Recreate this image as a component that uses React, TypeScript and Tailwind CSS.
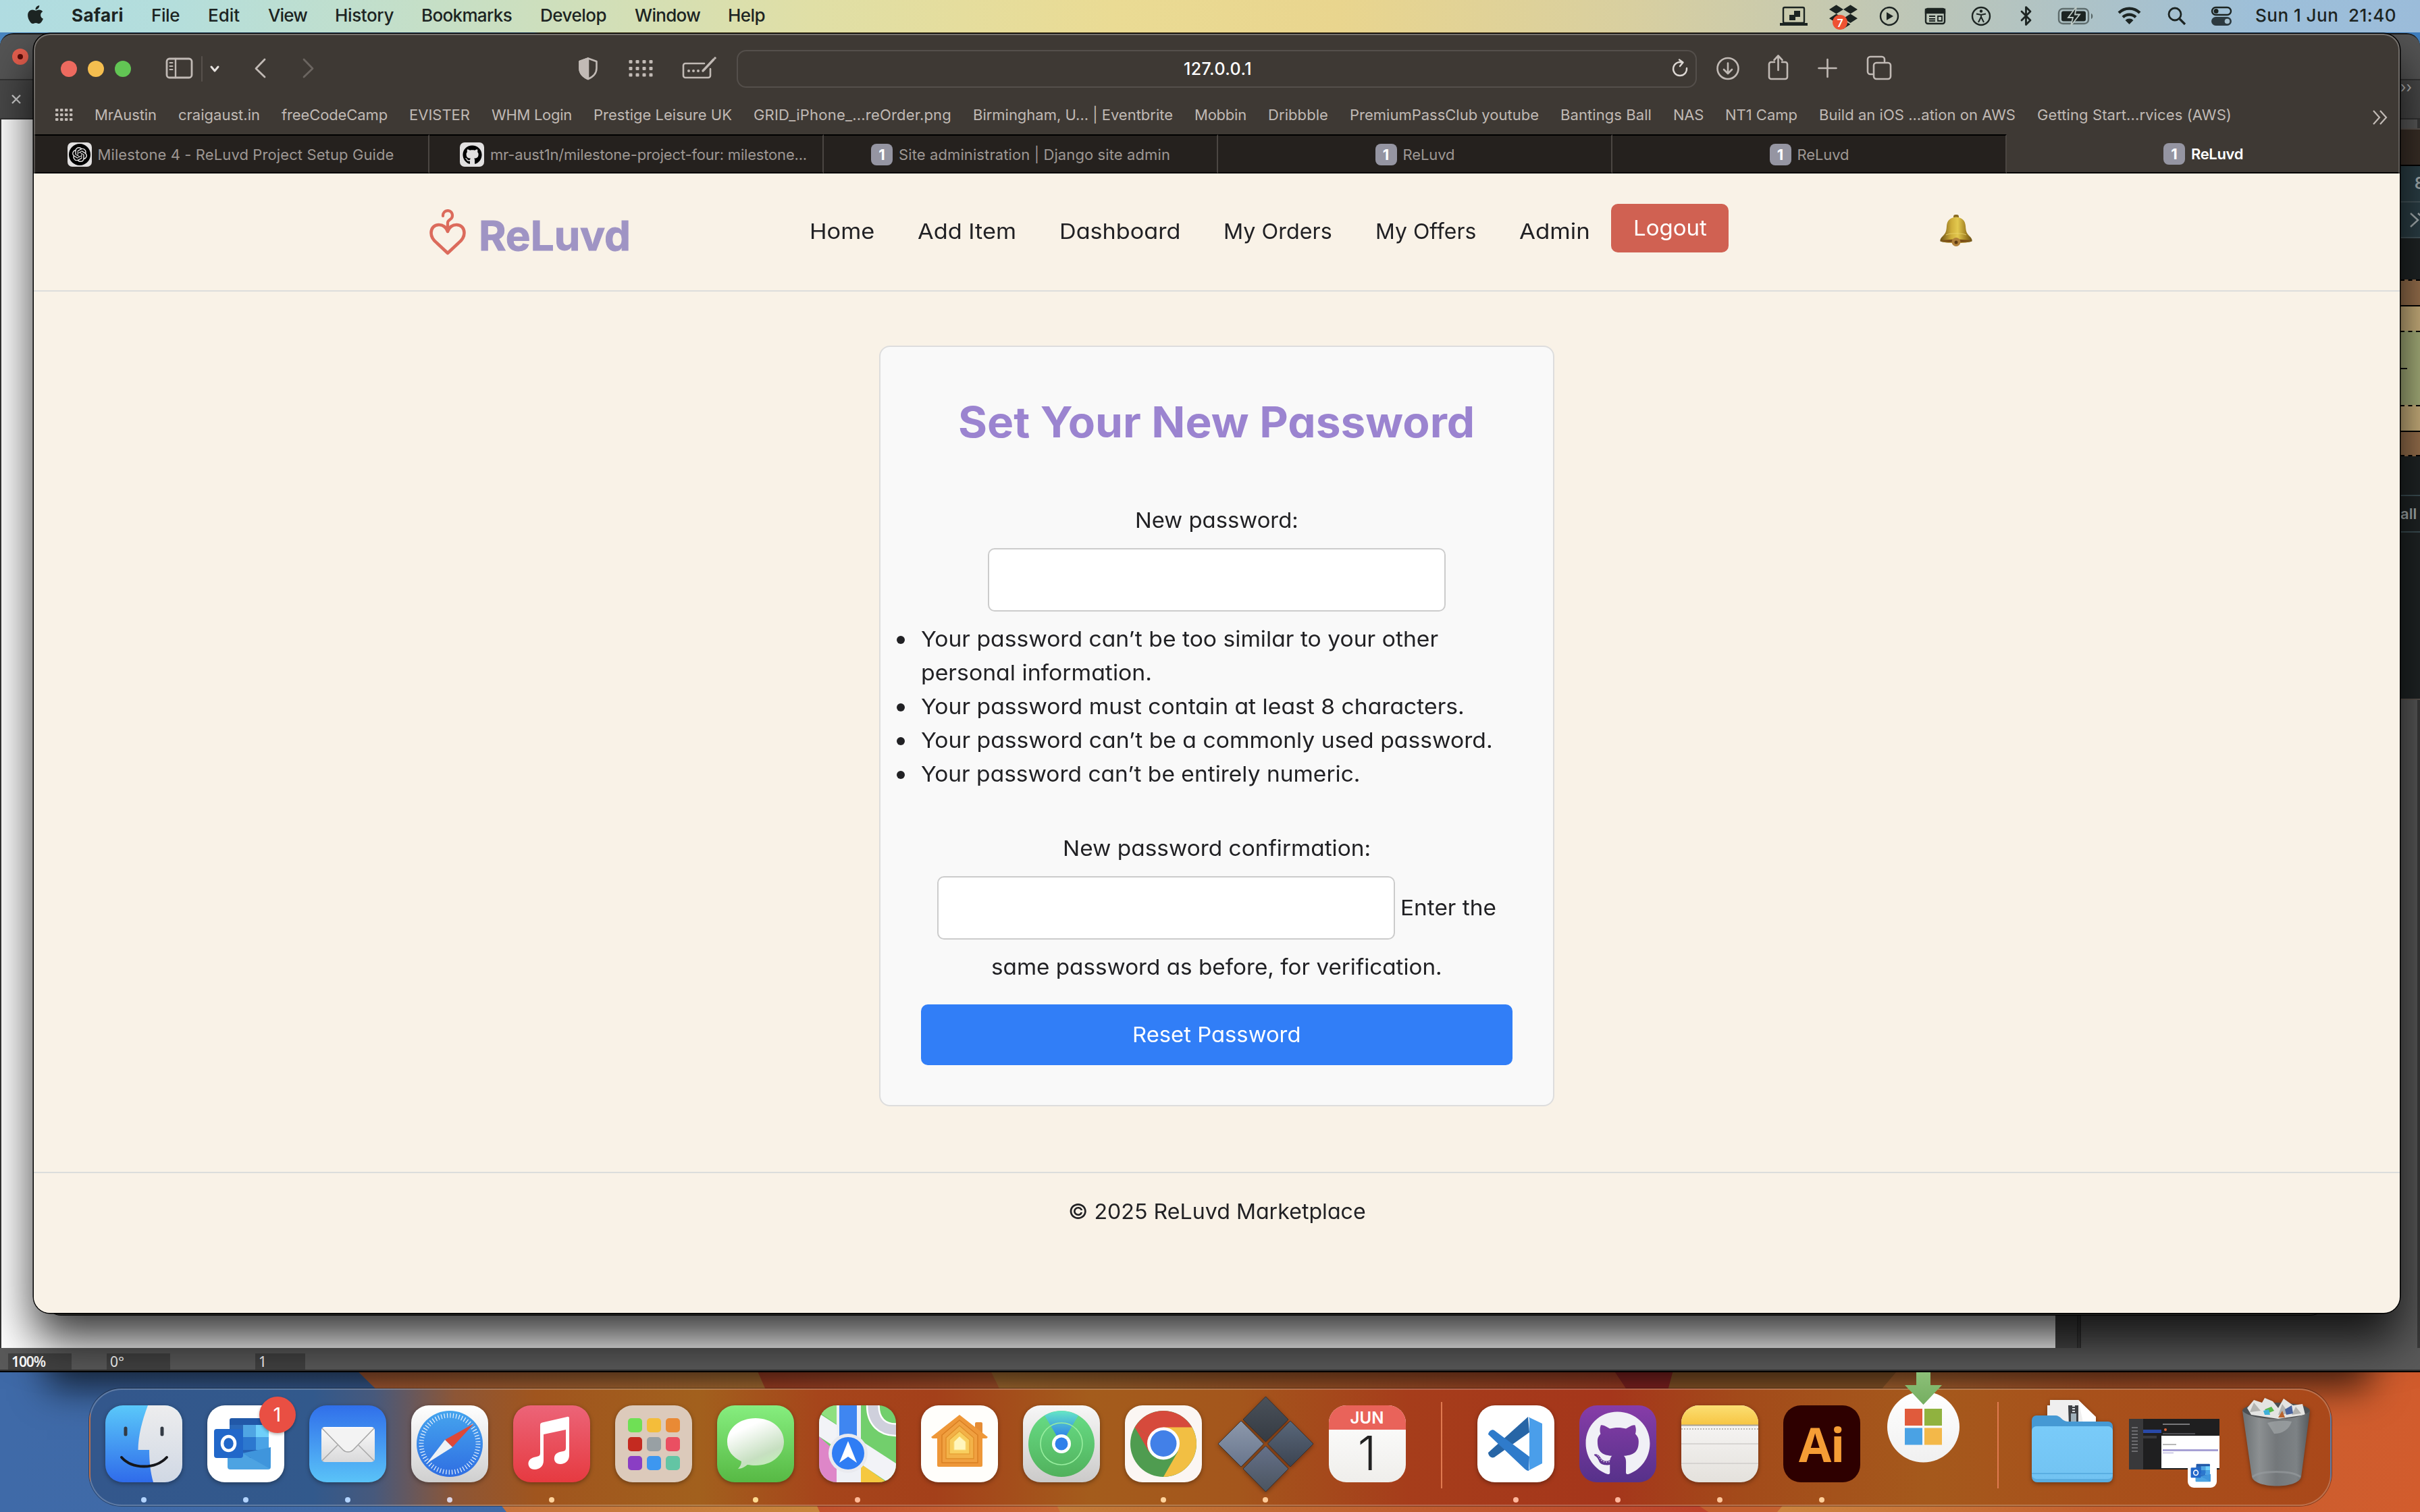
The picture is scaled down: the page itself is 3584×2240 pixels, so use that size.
import React, { useLayoutEffect, useRef, type ReactNode } from "react";
import { FaApple, FaDropbox, FaGithub } from "react-icons/fa";
import { SiOpenai } from "react-icons/si";
import { Bluetooth } from "lucide-react";

/* Text tracked at run time so that it fills a given width. */
function Fit({ w, children, className = "" }: { w: number; children: string; className?: string }) {
  const ref = useRef<HTMLSpanElement>(null);
  useLayoutEffect(() => {
    const el = ref.current;
    if (!el) return;
    el.style.letterSpacing = "0px";
    const natural = el.getBoundingClientRect().width;
    el.style.letterSpacing = `${(w - natural) / children.length}px`;
  }, [w, children]);
  return (
    <span ref={ref} className={`inline-block whitespace-pre ${className}`}>
      {children}
    </span>
  );
}

/* Text widened at run time, for the broad geometric look of the shop's pages. */
function Wide({ w, children, className = "" }: { w: number; children: string; className?: string }) {
  const ref = useRef<HTMLSpanElement>(null);
  useLayoutEffect(() => {
    const el = ref.current;
    if (el) el.style.transform = `scaleX(${w / el.offsetWidth})`;
  }, [w, children]);
  return (
    <span className={`inline-block whitespace-pre text-left ${className}`} style={{ width: w }}>
      <span ref={ref} className="inline-block origin-left">{children}</span>
    </span>
  );
}

/* ------------------------------------------------------------------ wallpaper */

function Wallpaper() {
  return (
    <svg className="absolute left-0 top-[2000px] h-[240px] w-[3584px]" viewBox="0 2000 3584 240" preserveAspectRatio="none">
      <defs>
        <linearGradient id="wpA" x1="0" x2="1"><stop offset="0" stopColor="#c66a3d" /><stop offset=".25" stopColor="#c8873b" /><stop offset="1" stopColor="#c8873b" /></linearGradient>
        <linearGradient id="wpB" x1="0" x2="1"><stop offset="0" stopColor="#bf4a2b" /><stop offset=".2" stopColor="#c86a35" /><stop offset="1" stopColor="#c86a35" /></linearGradient>
        <linearGradient id="wpC" x1="0" x2="1"><stop offset="0" stopColor="#c4823a" /><stop offset=".25" stopColor="#c06430" /><stop offset=".5" stopColor="#bd432b" /></linearGradient>
        <linearGradient id="wpD" x1="0" x2="1"><stop offset="0" stopColor="#cc853f" /><stop offset=".5" stopColor="#c4602f" /><stop offset="1" stopColor="#d25c2d" /></linearGradient>
        <linearGradient id="wpE" x1="0" x2="1"><stop offset="0" stopColor="#3f6aa8" /><stop offset="1" stopColor="#45699e" /></linearGradient>
      </defs>
      <rect x="0" y="2000" width="3584" height="240" fill="url(#wpE)" />
      <path d="M500 2000 C600 2110 700 2170 750 2240 H3584 V2000Z" fill="url(#wpA)" />
      <path d="M1108 2000 L1214 2240 H3584 V2000Z" fill="url(#wpB)" />
      <path d="M1452 2000 L1570 2240 H3584 V2000Z" fill="url(#wpC)" />
      <path d="M2370 2000 L2530 2240 H3584 V2000Z" fill="#9c2a28" />
      <path d="M2490 2000 L2440 2180 L2530 2240 H2700 V2000Z" fill="#c4602f" />
      <path d="M2486 2000 L2470 2060 L2800 2060 L2835 2000Z" fill="#a2652f" />
      <path d="M2836 2000 L2632 2240 H3584 V2000Z" fill="url(#wpD)" />
    </svg>
  );
}

/* ------------------------------------------------------------------ menu bar */

const menus: [string, number, string][] = [
  ["File", 42, "w-[84px]"],
  ["Edit", 47, "w-[89px]"],
  ["View", 58, "w-[99px]"],
  ["History", 87, "w-[128px]"],
  ["Bookmarks", 134, "w-[176px]"],
  ["Develop", 98, "w-[140px]"],
  ["Window", 97, "w-[138px]"],
  ["Help", 55, "w-[60px]"],
];

function MenuBar() {
  return (
    <div className="absolute left-0 top-0 flex h-12 w-[3584px] items-center bg-[linear-gradient(90deg,#b0dce1_0px,#b4dedc_250px,#c6dfc6_650px,#e0dfa6_1200px,#eadb94_1650px,#e9d58e_1980px,#d8cfa0_2420px,#b9c5bb_2900px,#9dbfd9_3350px,#9bbcda_3584px)] pb-[3px] pl-[37px] text-[26px] text-[#1c2422]">
      <FaApple className="mb-[2px] size-[31px]" />
      <div className="ml-[38px] w-[118px]"><Fit w={77} className="font-bold">Safari</Fit></div>
      {menus.map(([t, w, box]) => (
        <div key={t} className={box}><Fit w={w} className="font-medium">{t}</Fit></div>
      ))}
      <svg className="ml-auto mt-[3px] h-12 w-[720px]" viewBox="2620 0 720 48" fill="none" stroke="#1c2422" strokeWidth="2.4">
        <rect x="2641" y="11" width="31" height="23" rx="2" />
        <path d="M2636 36 H2677" strokeWidth="4" />
        <path d="M2657 16h9v9h-9zM2650 22h9v8h-9z" fill="#1c2422" stroke="none" />
        <circle cx="2798" cy="24" r="13" /><path d="M2794 18 L2804 24 L2794 30Z" fill="#1c2422" stroke="none" />
        <rect x="2852" y="13" width="28" height="22" rx="3" /><path d="M2852 14h28v5h-28z" fill="#1c2422" /><path d="M2857 24h9M2857 28h9M2857 31h9M2870 24h6v7h-6z" strokeWidth="1.800" />
        <circle cx="2934" cy="24" r="13" /><circle cx="2934" cy="16.500" r="2.200" fill="#1c2422" stroke="none" /><path d="M2927 20.500 L2934 22 L2941 20.500 M2934 22 V26 M2930 33 L2934 25 L2938 33" strokeWidth="2" />
        <rect x="3049" y="13" width="44" height="22" rx="6" opacity=".55" /><path d="M3097 20 v8 c3-1 3-7 0-8z" fill="#1c2422" stroke="none" opacity=".6" />
        <rect x="3053" y="16.500" width="36" height="15" rx="3" fill="#1c2422" stroke="none" />
        <path d="M3075 10 L3063 26 H3070 L3067 38 L3080 21.500 H3073Z" fill="#1c2422" stroke="#bcc8c4" strokeWidth="1.800" />
        <g strokeWidth="4.200"><path d="M3138 19 a22 22 0 0 1 31 0" /><path d="M3144 25.500 a13.500 13.500 0 0 1 19 0" /></g>
        <path d="M3153.500 36 L3147.500 30 a8.500 8.500 0 0 1 12 0Z" fill="#1c2422" stroke="none" />
        <circle cx="3221" cy="21" r="9" strokeWidth="2.800" /><path d="M3228 28 L3236 36" strokeWidth="3.200" />
        <rect x="3276" y="11" width="28" height="11" rx="5.500" /><circle cx="3282" cy="16.500" r="3.500" fill="#1c2422" stroke="none" />
        <rect x="3275" y="25" width="30" height="13" rx="6.500" fill="#2c3a40" stroke="none" /><circle cx="3298.500" cy="31.500" r="3.800" fill="#a5bfcd" stroke="none" />
      </svg>
      <FaDropbox className="absolute left-[2709px] top-[4px] size-[42px]" />
      <div className="absolute left-[2714px] top-[22px] grid size-[22px] place-items-center rounded-full bg-[#ee5233] text-[16px] font-semibold text-white">7</div>
      <Bluetooth className="absolute left-[2985px] top-[8px] size-[31px]" strokeWidth={2.2} />
      <div className="w-[244px]"><Fit w={209} className="font-medium">{"Sun 1 Jun  21:40"}</Fit></div>
    </div>
  );
}

/* ------------------------------------------------------------------ windows behind */

function ArtboardWindow() {
  return (
    <div className="absolute left-0 top-[49px] flex h-[1984px] w-[3584px] flex-col overflow-hidden rounded-t-[20px] border-b-2 border-t-2 border-b-black border-t-[#1b1b1b] bg-[#494949]">
      <div className="flex h-[68px] items-center justify-between border-b-2 border-[#333] bg-[#545454] pl-[18px]">
        <div className="grid size-6 place-items-center rounded-full bg-[#e9604f]"><div className="size-2 rounded-full bg-[#5c0d08]" /></div>
      </div>
      <div className="flex h-[58px] items-center justify-between border-b-2 border-[#333] bg-[#484848] pl-[17px]">
        <svg className="size-[14px]" viewBox="0 0 14 14" stroke="#d4d4d4" strokeWidth="2.400"><path d="M1 1L13 13M13 1L1 13" /></svg>
        <div className="self-start pr-[12px] text-[22px] leading-[20px] text-[#bbb]">››</div>
      </div>
      <div className="flex min-h-0 flex-1">
        <div className="w-[3044px] border-l-2 border-[#333] bg-white" />
        <div className="w-8" />
        <div className="w-[6px] border-x-2 border-[#333] bg-[#404040]" />
        <div className="flex-1 border-r-4 border-[#3a3a3a] bg-[#5a5a5a]" />
      </div>
      <div className="flex h-8 items-end bg-[#5a5a5a] pl-[12px] font-['Noto_Sans'] text-[21px] text-white">
        <div className="flex h-6 w-[94px] items-center bg-[#424242] pl-[5px] pt-[2px]"><Fit w={50} className="font-semibold">100%</Fit></div>
        <div className="ml-[52px] flex h-6 w-[94px] items-center bg-[#424242] pl-[5px] pt-[2px]">0°</div>
        <div className="ml-[126px] flex h-6 w-[74px] items-center bg-[#424242] pl-[5px] pt-[2px]">1</div>
      </div>
      <div className="h-[2px] bg-[#333]" />
    </div>
  );
}

function InspectorWindow() {
  return (
    <div className="absolute left-[3400px] top-[190px] flex h-[847px] w-[184px] flex-col overflow-hidden border-b-2 border-t-2 border-[#5d5651] bg-[#1f2425] pl-[155px] text-[#a9b2b4]">
      <div className="h-[54px] border-b-2 border-black bg-[#3a2f27]" />
      <div className="flex h-[54px] items-center justify-end border-b-2 border-[#45565c] bg-[#2b3f46] text-[24px] font-semibold"><span className="-mr-[7px]">8</span></div>
      <div className="flex h-[53px] items-center justify-end overflow-hidden border-b-2 border-[#45565c] bg-[#2b3f46]">
        <svg className="h-[22px] w-[15px]" viewBox="0 0 15 22" fill="none" stroke="#a9b2b4" strokeWidth="2.400"><path d="M1 1L12 11L1 21M12 1L23 11" /></svg>
      </div>
      <div className="h-[61px]" />
      <div className="h-[38px] border-t-2 border-dashed border-black bg-[#9a724e]" />
      <div className="h-[38px] border-t-2 border-black bg-[#cdb37e]" />
      <div className="flex h-[110px] items-center border-t-2 border-dashed border-black bg-[#a9b27c]"><div className="h-[2px] w-[10px] bg-[#111]" /></div>
      <div className="h-[38px] border-t-2 border-dashed border-black bg-[#cdb37e]" />
      <div className="h-[38px] border-y-2 border-b-black border-t-black bg-[#9a724e] [border-bottom-style:dashed]" />
      <div className="h-[57px]" />
      <div className="flex h-[56px] items-center border-y-2 border-[#3d5056] text-[22px] font-semibold">all</div>
    </div>
  );
}

/* ------------------------------------------------------------------ Safari chrome */

function ToolbarIcons() {
  return (
    <>
      <svg className="absolute left-[190px] top-[20px] h-[64px] w-[240px]" viewBox="240 70 240 64" fill="none" stroke="#c1bab5" strokeWidth="2.800" strokeLinecap="round" strokeLinejoin="round">
        <rect x="247" y="87" width="37" height="28" rx="4" /><path d="M260 87 V115" strokeWidth="2.400" /><path d="M251.500 93h4M251.500 98h4M251.500 103h4" strokeWidth="2" />
        <path d="M299 84 V120" stroke="#57514c" strokeWidth="2" />
        <path d="M313 99 L318 105 L323 99" stroke="#e6e2df" strokeWidth="3" />
        <path d="M392 88 L379 101.500 L392 114" />
        <path d="M450 88 L463 101.500 L450 114" stroke="#6b6560" />
      </svg>
      <svg className="absolute left-[790px] top-[20px] h-[64px] w-[240px]" viewBox="840 70 240 64" fill="none" stroke="#c1bab5" strokeWidth="2.600" strokeLinecap="round" strokeLinejoin="round">
        <path d="M871 86.500 L883.500 91 V101 C883.500 109 878 114 871 117 C864 114 858.500 109 858.500 101 V91Z" />
        <path d="M871 86.500 V117 C864 114 858.500 109 858.500 101 V91Z" fill="#c1bab5" />
        {[934, 944, 954, 964].map((x) => [91.5, 101.5, 111].map((y) => <rect key={`${x}-${y}`} x={x - 2.500} y={y - 2.500} width="5" height="5" rx="1.200" fill="#c1bab5" stroke="none" />))}
        <path d="M1043 94 H1015 a3 3 0 0 0 -3 3 V112 a3 3 0 0 0 3 3 H1049 a3 3 0 0 0 3 -3 V102" />
        <path d="M1041 105 L1057 88" strokeWidth="3.400" /><path d="M1059 86 v.01" strokeWidth="3.600" />
        <path d="M1020 105v.01M1027 105v.01M1034 105v.01" strokeWidth="4" />
      </svg>
      <svg className="absolute left-[2420px] top-[20px] h-[64px] w-[360px]" viewBox="2470 70 360 64" fill="none" stroke="#c1bab5" strokeWidth="2.600" strokeLinecap="round" strokeLinejoin="round">
        <path d="M2491 92.500 A10 10 0 1 0 2498 101" stroke="#dcd7d3" strokeWidth="2.400" /><path d="M2487 88.500 L2492.500 92.500 L2488 98" stroke="#dcd7d3" strokeWidth="2.400" />
        <circle cx="2559" cy="101.500" r="15.500" /><path d="M2559 93.500 V108 M2553 103 L2559 109 L2565 103" />
        <path d="M2628 92 H2623 a3 3 0 0 0 -3 3 V114 a3 3 0 0 0 3 3 H2644 a3 3 0 0 0 3 -3 V95 a3 3 0 0 0 -3 -3 H2639 M2633.500 104 V83 M2627.500 89 L2633.500 82.500 L2639.500 89" />
        <path d="M2706.500 88 V114 M2693.500 101 H2719.500" />
        <rect x="2775" y="93" width="25" height="24" rx="4" /><path d="M2773 110 H2770 a4 4 0 0 1 -4 -4 V88 a4 4 0 0 1 4 -4 H2787 a4 4 0 0 1 4 4 V91" />
      </svg>
    </>
  );
}

const bookmarks: [string, number][] = [
  ["MrAustin", 92], ["craigaust.in", 121], ["freeCodeCamp", 157], ["EVISTER", 90], ["WHM Login", 119],
  ["Prestige Leisure UK", 205], ["GRID_iPhone_...reOrder.png", 293], ["Birmingham, U... | Eventbrite", 296],
  ["Mobbin", 77], ["Dribbble", 89], ["PremiumPassClub youtube", 280], ["Bantings Ball", 135], ["NAS", 45],
  ["NT1 Camp", 107], ["Build an iOS ...ation on AWS", 291], ["Getting Start...rvices (AWS)", 288],
];

const One = () => <span className="grid size-8 place-items-center rounded-[8px] bg-[#9595a2] text-[22px] font-bold text-white">1</span>;

const idle = "border-y-2 border-r-2 border-y-black border-r-[#4b4642] bg-[#25211e] text-[#9d9793]";

const tabs: { icon: ReactNode; text: string; w: number; box: string }[] = [
  { icon: <span className="grid size-9 place-items-center rounded-[7px] bg-[#e2e0e0]"><span className="grid size-8 place-items-center rounded-full bg-black text-[#e2e0e0]"><SiOpenai className="size-[22px]" /></span></span>, text: "Milestone 4 - ReLuvd Project Setup Guide", w: 439, box: `w-[586px] pr-[1px] ${idle}` },
  { icon: <span className="grid size-9 place-items-center rounded-[7px] bg-[#e2e0e0] text-black"><FaGithub className="size-[29px]" /></span>, text: "mr-aust1n/milestone-project-four: milestone...", w: 469, box: `w-[584px] pl-[22px] ${idle}` },
  { icon: <One />, text: "Site administration | Django site admin", w: 402, box: `w-[584px] pl-[1px] ${idle}` },
  { icon: <One />, text: "ReLuvd", w: 77, box: `w-[584px] pl-[1px] ${idle}` },
  { icon: <One />, text: "ReLuvd", w: 77, box: `w-[584px] pl-[1px] ${idle}` },
  { icon: <One />, text: "ReLuvd", w: 77, box: "w-[582px] border-b-2 border-b-black font-semibold text-white" },
];

function Chrome() {
  return (
    <div className="relative h-[207px] bg-[#3e3934]">
      <div className="flex h-[104px] items-center pl-[40px]">
        <div className="flex gap-4">
          <div className="size-6 rounded-full bg-[#ed6a5f]" />
          <div className="size-6 rounded-full bg-[#f5be4f]" />
          <div className="size-6 rounded-full bg-[#62c554]" />
        </div>
        <div className="ml-[897px] flex h-14 w-[1422px] items-center justify-center rounded-[14px] border-2 border-[#544f4b] pl-[3px] pt-px text-[25px] font-medium text-white"><Fit w={101}>127.0.0.1</Fit></div>
      </div>
      <ToolbarIcons />
      <div className="flex h-[45px] items-center gap-8 pb-[13px] pl-[32px] text-[22px] leading-[30px] text-[#c0b9b4]">
        <svg className="h-[18px] w-[26px] fill-[#c1bab5]" viewBox="0 0 26 18">
          {[0, 7, 14, 21].map((x) => [0, 7, 14].map((y) => <rect key={`${x}-${y}`} x={x} y={y} width="4.400" height="4" rx="1" />))}
        </svg>
        {bookmarks.map(([t, w]) => <Fit key={t} w={w}>{t}</Fit>)}
        <svg className="ml-auto mr-[17px] mt-[8px] h-[22px] w-[24px]" viewBox="0 0 24 22" fill="none" stroke="#c1bab5" strokeWidth="2.200"><path d="M2 1L11 11L2 21M12 1L21 11L12 21" /></svg>
      </div>
      <div className="flex h-[58px]">
        {tabs.map((t, i) => (
          <div key={i} className={`flex items-center justify-center gap-[9px] pt-[2px] text-[22px] ${t.box}`}>
            {t.icon}
            <Fit w={t.w}>{t.text}</Fit>
          </div>
        ))}
      </div>
    </div>
  );
}

/* ------------------------------------------------------------------ web page */

function Bell() {
  return (
    <svg className="h-[47px] w-[48px]" viewBox="0 0 48 47">
      <defs>
        <linearGradient id="bell" x1="0" x2="1"><stop offset="0" stopColor="#6b4f16" /><stop offset=".35" stopColor="#cfae3a" /><stop offset=".55" stopColor="#e3c94f" /><stop offset=".8" stopColor="#a58424" /><stop offset="1" stopColor="#6d5217" /></linearGradient>
      </defs>
      <rect x="20" y="0" width="8" height="6" rx="3" fill="#8a6a20" />
      <path d="M24 3.500 C33 4 37.500 9 38 17 C38.500 24 39 27 44 32 C47 35 48 37 47.500 39.500 C40 43 8 43 .5 39.500 C0 37 1 35 4 32 C9 27 9.500 24 10 17 C10.500 9 15 4 24 3.500Z" fill="url(#bell)" />
      <path d="M2 38.500 C12 36 36 36 46 38.500 C38 42.500 10 42.500 2 38.500Z" fill="#7b4f17" />
      <circle cx="24" cy="40.500" r="6.500" fill="#b0803a" /><circle cx="24" cy="41" r="2.500" fill="#5d3a12" />
      <path d="M9 30 C16 27 32 27 39 30" stroke="#ecd873" strokeWidth="1.200" fill="none" opacity=".7" />
    </svg>
  );
}

const nav: [string, number][] = [["Home", 96], ["Add Item", 146], ["Dashboard", 179], ["My Orders", 161], ["My Offers", 149], ["Admin", 105]];
const hints: [string, number][][] = [
  [["Your password can’t be too similar to your other", 766], ["personal information.", 342]],
  [["Your password must contain at least 8 characters.", 805]],
  [["Your password can’t be a commonly used password.", 847]],
  [["Your password can’t be entirely numeric.", 650]],
];

function Page() {
  return (
    <div className="flex-1 bg-[#f9f2e7] text-[31.500px] leading-[50px] text-[#212124] [font-feature-settings:'cv11']">
      <header className="flex h-[175px] items-center border-b-2 border-[#dcdddc] pl-[586px]">
        <div className="flex w-[563px] items-center">
          <svg className="h-[68px] w-[54px]" viewBox="0 0 54 68" fill="none" stroke="#dc6b5c" strokeWidth="4.600" strokeLinecap="round" strokeLinejoin="round">
            <path d="M27 33 C24 25 18 23 14 23 C7 23 2.500 28 2.500 35 C2.500 42 6 46 11 50 L27 65 L43 50 C48 46 51.500 42 51.500 35 C51.500 28 47 23 40 23 C36 23 30 25 27 33Z" />
            <path d="M27 33 V20 C27 15 34 16 34 9.500 C34 -1 19.500 0 20 10" strokeWidth="4.200" />
          </svg>
          <div className="ml-[19px] mt-[14px] pt-[8px] leading-[70px]"><Wide w={225} className="text-[61px] font-bold text-[#9f94c4] [-webkit-text-stroke:1px_#9f94c4] [paint-order:stroke]">ReLuvd</Wide></div>
        </div>
        <nav className="flex gap-16 pb-px">{nav.map(([t, w]) => <Wide key={t} w={w}>{t}</Wide>)}</nav>
        <div className="mb-[12px] ml-[31px] flex h-[72px] w-[174px] items-center justify-center rounded-[10px] bg-[#d06152] text-white"><Wide w={109}>Logout</Wide></div>
        <div className="mb-[4px] ml-[313px]"><Bell /></div>
      </header>
      <main className="flex justify-center pb-[97px] pt-20">
        <div className="flex h-[1127px] w-[1000px] flex-col items-center rounded-2xl border-2 border-[#dddddd] bg-[#f9f9f9] px-[60px]">
          <h1 className="mt-[71px] text-[63px] font-bold leading-[80px] text-[#9b84d0]"><Wide w={765} className="-translate-x-px">Set Your New Password</Wide></h1>
          <label className="mt-[81px] h-[50px]"><Wide w={242}>New password:</Wide></label>
          <input className="mt-[16px] h-[94px] w-[678px] shrink-0 rounded-[10px] border-2 border-[#cccccc] bg-white" />
          <ul className="mt-4 w-full">
            {hints.map((lines) => (
              <li key={lines[0][0]} className="-ml-[36px] flex">
                <span className="mr-[24px] mt-[20px] size-[12px] rounded-full bg-[#212124]" />
                <div className="flex flex-col">{lines.map(([t, w]) => <span key={t} className="h-[50px]"><Wide w={w}>{t}</Wide></span>)}</div>
              </li>
            ))}
          </ul>
          <label className="mt-[60px] h-[50px]"><Wide w={456}>New password confirmation:</Wide></label>
          <div className="mt-4 flex items-center gap-[8px]">
            <input className="h-[94px] w-[678px] rounded-[10px] border-2 border-[#cccccc] bg-white" />
            <Wide w={142}>Enter the</Wide>
          </div>
          <p className="mt-4 h-[50px]"><Wide w={668}>same password as before, for verification.</Wide></p>
          <button className="mt-[30px] h-[90px] w-full shrink-0 rounded-[10px] bg-[#317ef7] text-white"><Wide w={250}>Reset Password</Wide></button>
        </div>
      </main>
      <footer className="flex justify-center border-t-2 border-[#dcdddc] pt-[32px]"><Wide w={441}>© 2025 ReLuvd Marketplace</Wide></footer>
    </div>
  );
}

/* ------------------------------------------------------------------ dock icons */

const Svg = ({ children }: { children: ReactNode }) => (
  <svg className="size-[114px] overflow-visible drop-shadow-[0_2px_3px_rgba(0,0,0,0.35)]" viewBox="0 0 114 114">{children}</svg>
);
const G = ({ id, a, b }: { id: string; a: string; b: string }) => (
  <linearGradient id={id} x1="0" x2="0" y1="0" y2="1"><stop offset="0" stopColor={a} /><stop offset="1" stopColor={b} /></linearGradient>
);
const Tile = ({ fill }: { fill: string }) => <rect width="114" height="114" rx="26" fill={fill} />;

const Finder = () => (
  <Svg>
    <defs><G id="fa" a="#5ac8fa" b="#2f6bea" /><G id="fb" a="#ededee" b="#d0d8e4" /><clipPath id="fc"><rect width="114" height="114" rx="26" /></clipPath></defs>
    <g clipPath="url(#fc)">
      <rect width="114" height="114" fill="url(#fa)" />
      <path d="M63 0 C54 24 49 44 48.500 66 H65 C65 84 67 100 71 114 H114 V0Z" fill="url(#fb)" />
    </g>
    <path d="M30 34V43M84 34V43" stroke="#333a44" strokeWidth="5" strokeLinecap="round" />
    <path d="M24 77 C40 95 74 95 91 77" stroke="#15161a" strokeWidth="4" fill="none" strokeLinecap="round" />
  </Svg>
);

const OutlookMark = () => (
  <>
    <path d="M33 22 a3 3 0 0 1 3-3 H88 a3 3 0 0 1 3 3 V60 H33Z" fill="#2158a8" />
    <rect x="33" y="29" width="20" height="18" fill="#2a68b8" /><rect x="53" y="29" width="19" height="18" fill="#4fa5e3" /><rect x="72" y="29" width="19" height="18" fill="#6fd0fa" />
    <rect x="33" y="47" width="20" height="20" fill="#1f5fb5" /><rect x="53" y="47" width="19" height="20" fill="#2c78cf" /><rect x="72" y="47" width="19" height="20" fill="#4aa3e6" />
    <path d="M30 66 H94 V91 a4 4 0 0 1 -4 4 H34 a4 4 0 0 1 -4 -4Z" fill="#4da3e2" />
    <path d="M47 66 H83 L64 78Z" fill="#2561b4" /><path d="M52 71 L93 94 L94 62Z" fill="#3f95dc" />
    <rect x="10" y="35" width="43" height="43" rx="4" fill="#2167c9" />
    <ellipse cx="31.500" cy="56.500" rx="9.500" ry="10.500" fill="none" stroke="#fff" strokeWidth="4.600" />
  </>
);
const Outlook = () => (
  <div className="relative">
    <Svg><Tile fill="#fff" /><OutlookMark /></Svg>
    <div className="absolute -right-[17px] -top-[13px] grid size-[54px] place-items-center rounded-full bg-[#e94f43] text-[29px] text-white shadow-[0_2px_4px_rgba(0,0,0,0.3)]">1</div>
  </div>
);
const Mail = () => (
  <Svg>
    <defs><G id="ma" a="#306fea" b="#5ac3f8" /><G id="mb" a="#fbfbfb" b="#d9d9da" /></defs>
    <Tile fill="url(#ma)" /><rect x="18" y="32" width="79" height="52" rx="5" fill="url(#mb)" />
    <path d="M19 82 L42 59 M96 82 L73 59" stroke="#a9a9a9" strokeWidth="1.600" />
    <path d="M19 34 L50 66 C54 70 61 70 65 66 L96 34" fill="#f3f3f3" stroke="#a5a5a5" strokeWidth="1.600" />
  </Svg>
);
const SafariIcon = () => (
  <Svg>
    <defs><G id="sa" a="#ffffff" b="#cfcfcf" /><G id="sb" a="#45a4ee" b="#2f6ee2" /></defs>
    <Tile fill="url(#sa)" /><circle cx="57" cy="57" r="49" fill="url(#sb)" />
    <circle cx="57" cy="57" r="42" fill="none" stroke="#e8f2fc" strokeWidth="7" strokeDasharray="1.200 3.200" />
    <path d="M93 27 L50 51 L61 62Z" fill="#dd4838" /><path d="M23 86 L50 51 L61 62Z" fill="#eff2f5" />
  </Svg>
);
const Music = () => (
  <Svg>
    <defs><G id="mu" a="#ec6478" b="#e63a40" /></defs>
    <Tile fill="url(#mu)" />
    <path d="M40 29 C40 27 41 26 43 25.500 L80 17 C82 16.500 83 17.500 83 19 V74 C83 82 77 87 70 87 C63 87 60 82 61 77 C62 71 67 69 74 68 C77 67.500 78 66 78 63 V36 L45 43 V82 C45 90 39 95 32 95 C25 95 22 90 22.500 85 C23.500 79 29 77 35 76 C39 75 40 74 40 70Z" fill="#fff" />
  </Svg>
);
const Launchpad = () => (
  <Svg>
    <Tile fill="#dccabb" />
    {["#6fe055", "#f4bd3a", "#e98a35", "#c42a20", "#98a0a4", "#ea4f62", "#8a3ec4", "#3d97f0", "#63c5a4"].map((c, i) => (
      <rect key={i} x={19 + (i % 3) * 28} y={19 + Math.floor(i / 3) * 28} width="21" height="21" rx="5" fill={c} />
    ))}
  </Svg>
);
const Messages = () => (
  <Svg>
    <defs><G id="me" a="#86ee7f" b="#57b944" /><linearGradient id="mf" x1=".2" y1="0" x2=".7" y2="1"><stop offset=".2" stopColor="#fff" /><stop offset=".75" stopColor="#c6dfc0" /><stop offset="1" stopColor="#c4f0ba" /></linearGradient></defs>
    <Tile fill="url(#me)" />
    <path d="M57 19 C81 19 99 34 99 54 C99 74 81 89 57 89 C53 89 48 88.500 45 88 C41 91 36 94 31 94 C34 91 36 87 36 83 C23 77 15 67 15 54 C15 34 33 19 57 19Z" fill="url(#mf)" />
  </Svg>
);
const Maps = () => (
  <Svg>
    <defs><clipPath id="mc"><rect width="114" height="114" rx="26" /></clipPath></defs>
    <g clipPath="url(#mc)">
      <rect width="114" height="114" fill="#72cf6c" /><path d="M0 0H26V28L0 10Z" fill="#8fe07f" />
      <path d="M0 46 L26 70 V114 H0Z" fill="#de86c8" />
      <path d="M0 12 L114 86 V122 L0 46Z" fill="#f2f3f7" /><path d="M61 86 L100 114 H61Z" fill="#f5c83f" />
      <rect x="26" width="36" height="114" fill="#eef0f5" /><rect x="30" width="26" height="60" fill="#3f86f1" />
      <path d="M80 -4 C78 24 94 38 118 36" fill="none" stroke="#fff" strokeWidth="20" /><path d="M80 -4 C78 24 94 38 118 36" fill="none" stroke="#cfd0dc" strokeWidth="15" />
    </g>
    <circle cx="43" cy="71" r="29" fill="#e9eaef" /><circle cx="43" cy="71" r="24" fill="#2f7df4" />
    <path d="M43 53 L56 85 L43 76 L30 85Z" fill="#fff" />
  </Svg>
);
const House = () => (
  <Svg>
    <Tile fill="#fffefb" /><rect x="80" y="25" width="11" height="24" rx="2" fill="#e58c34" />
    <path d="M57 14 L99 47 L97 49 H91 V89 a2 2 0 0 1-2 2 H26 a2 2 0 0 1-2-2 V49 H17 L15 47Z" fill="#ee9738" />
    <path d="M57 22 L84 44 V85 H31 V44Z" fill="#f0a040" stroke="#d97f22" strokeWidth="1.400" />
    <path d="M57 30 L78 48 V79 H37 V48Z" fill="#f3b249" stroke="#e08e28" strokeWidth="1.400" />
    <path d="M57 38 L72 51 V72 H42 V51Z" fill="#f8cf5f" stroke="#e8a437" strokeWidth="1.400" />
    <path d="M57 46 L66 54 V66 H49 V54Z" fill="#fff6bd" stroke="#fbe384" />
  </Svg>
);
const FindMy = () => (
  <Svg>
    <defs><G id="fm" a="#f7f7f7" b="#cbcac9" /><G id="fg" a="#68dd86" b="#51b15c" /><linearGradient id="fw" x1="0" x2="0" y1="0" y2="1"><stop offset="0" stopColor="#65e6c6" /><stop offset="1" stopColor="#1f67f2" /></linearGradient></defs>
    <Tile fill="url(#fm)" /><circle cx="57" cy="57" r="49" fill="url(#fg)" />
    <path d="M57 57 L32 15 A49 49 0 0 1 82 15Z" fill="url(#fw)" />
    <circle cx="57" cy="57" r="31" fill="none" stroke="#98ee9f" strokeWidth="1.600" />
    <circle cx="57" cy="57" r="14" fill="#fff" /><circle cx="57" cy="57" r="9.500" fill="#2f80ea" />
  </Svg>
);
const ChromeIcon = () => (
  <Svg>
    <Tile fill="#fbf6f3" />
    <circle cx="57" cy="57" r="49" fill="#4f9c50" />
    <path d="M57 57 L14.600 32.500 A49 49 0 0 1 99.400 32.500Z" fill="#d64a3c" />
    <path d="M57 32.500 H99.400 A49 49 0 0 1 57 106 L78.200 69Z" fill="#f2bf43" />
    <path d="M14.600 32.500 L35.800 69 L57 57Z" fill="#d64a3c" />
    <circle cx="57" cy="56.500" r="24" fill="#fff" /><circle cx="57" cy="56.500" r="19.500" fill="#4280e8" />
  </Svg>
);
const Diamonds = () => (
  <Svg>
    <defs><G id="d1" a="#4a515a" b="#353b43" /><G id="d2" a="#8d99ac" b="#68758c" /><G id="d3" a="#59677a" b="#3c4451" /><G id="d4" a="#65718a" b="#4b545f" /></defs>
    <g stroke="#2a2a2e" strokeWidth=".8">
      <path d="M57.500 -13 L91 21 L57.500 54 L24 21Z" fill="url(#d1)" /><path d="M21 23 L54.500 57 L21 91 L-13 57Z" fill="url(#d2)" />
      <path d="M94 23 L128 57 L94 91 L60.500 57Z" fill="url(#d3)" /><path d="M57.500 60 L91 94 L57.500 128 L24 94Z" fill="url(#d4)" />
    </g>
  </Svg>
);
const Calendar = () => (
  <div className="flex size-[114px] flex-col overflow-hidden rounded-[26px] bg-gradient-to-b from-white to-[#efeeeb] text-center text-[#222]">
    <div className="h-[36px] shrink-0 bg-[#e9635a] text-[24px] font-semibold leading-[38px] text-white">JUN</div>
    <div className="text-[70px] font-light leading-[70px]">1</div>
  </div>
);
const Code = () => (
  <Svg>
    <Tile fill="#fff" />
    <path d="M75 17 L16 70 C16 74 20 79 25 77 L77 40Z" fill="#2765a6" />
    <path d="M16 43 C17 38 22 35 25 37 L77 76 L76 97 C74 97 72 96 70 94Z" fill="#2f7bcb" />
    <path d="M75 17 L96 27 V86 L75 97 C77 96 77 93 77 91 V23 C77 20 77 18 75 17Z" fill="#4a9eea" />
  </Svg>
);
const GitHubDesktop = () => (
  <div className="grid size-[114px] place-items-center rounded-[26px] bg-gradient-to-b from-[#873ca8] to-[#56318a] text-[#f0f0f6]"><FaGithub className="size-[98px]" /></div>
);
const Notes = () => (
  <Svg>
    <defs><G id="na" a="#fbdf73" b="#f7c543" /><G id="nb" a="#fbfafa" b="#e4e1dc" /><clipPath id="nc"><rect width="114" height="114" rx="26" /></clipPath></defs>
    <g clipPath="url(#nc)"><rect width="114" height="114" fill="url(#nb)" /><rect width="114" height="29" fill="url(#na)" /><path d="M0 29.500H114" stroke="#a7a296" strokeWidth="2" /><path d="M0 35H114" stroke="#b9b6b0" strokeWidth="2" strokeDasharray="2 2" /><path d="M0 57H114M0 86H114" stroke="#cfcdca" strokeWidth="1.600" /></g>
  </Svg>
);
const Illustrator = () => (
  <div className="grid size-[114px] place-items-center rounded-[26px] bg-[#2e0000] text-[#f59d35]"><Fit w={67} className="font-['Open_Sans'] text-[70px] font-bold leading-[98px]">Ai</Fit></div>
);
const Installer = () => (
  <svg className="mb-[84px] h-[140px] w-[107px] shrink-0 overflow-visible" viewBox="0 0 107 140">
    <defs><G id="in" a="#ffffff" b="#f0f0f0" /><G id="ig" a="#8cc078" b="#74ae60" /></defs>
    <ellipse cx="53.500" cy="87" rx="53.500" ry="52.500" fill="url(#in)" />
    <rect x="26" y="60" width="26" height="25" fill="#e05b3c" /><rect x="55" y="60" width="26" height="25" fill="#90b23f" />
    <rect x="26" y="88.500" width="26" height="25" fill="#4aa2e4" /><rect x="55" y="88.500" width="26" height="25" fill="#f3b849" />
    <path d="M43 6 H64 V25 H81 L53.500 54 L26 25 H43Z" fill="url(#ig)" />
  </svg>
);
const Folder = () => (
  <Svg>
    <defs><G id="fo" a="#79cbf9" b="#72c3f2" /></defs>
    <path d="M20 0 H24 V-8 H66 L92 20 V40 H20Z" fill="#efefef" /><path d="M66 -8 L92 17 V30 H74Z" fill="#fff" />
    <path d="M51 0 H66 V30 H52Z" fill="#3d4044" /><path d="M59 0 V28" stroke="#d5dade" strokeWidth="4" strokeDasharray="2 2" /><path d="M55 12 h8 v14 h-8z" fill="#9fb0ba" />
    <path d="M-3 22 a7 7 0 0 1 7-7 H32 C40 15 42 24 50 24 H110 a7 7 0 0 1 7 7 V60 H-3Z" fill="#4599d4" />
    <rect x="-3" y="31" width="120" height="83" rx="8" fill="#5aade0" /><rect x="-3" y="31" width="120" height="78" rx="7" fill="url(#fo)" /><path d="M-3 101H117" stroke="#59aee2" strokeWidth="2" />
  </Svg>
);
const Thumb = () => (
  <div className="relative flex h-[75px] w-[134px] bg-[#1f1f20]">
    <div className="flex w-[21px] flex-col gap-[3px] bg-[#39393b] pl-[4px] pt-[12px]">
      {[0, 1, 2, 3, 4, 5, 6, 7].map((i) => <div key={i} className="h-[2px] w-[9px] bg-[#6d6d70]" />)}
    </div>
    <div className="w-[27px] pt-[16px]"><div className="h-[5px] bg-[#2949a8]" /><div className="mt-1 h-[4px] w-5 bg-[#3a3a3d]" /></div>
    <div className="flex flex-1 flex-col">
      <div className="flex h-[25px] flex-col gap-[3px] pl-[2px] pt-[7px]"><div className="h-[2px] w-10 bg-[#77777a]" /><div className="ml-[2px] mt-[2px] size-[4px] rounded-full bg-[#e0663a]" /><div className="h-[2px] w-12 bg-[#505054]" /></div>
      <div className="mb-[2px] flex flex-1 flex-col bg-white pl-[2px] pt-[12px]"><div className="h-[2px] w-5 bg-[#b8b8b8]" /><div className="mt-[6px] h-[3px] w-[82px] bg-[#a6a0d4]" /><div className="mt-[2px] h-px w-4 bg-[#a6a0d4]" /></div>
    </div>
    <div className="absolute -bottom-[27px] left-[87px] grid size-[43px] place-items-center rounded-[9px] bg-white"><svg viewBox="0 0 114 114" className="size-[40px]"><OutlookMark /></svg></div>
  </div>
);
const Trash = () => (
  <Svg>
    <defs><linearGradient id="tr" x1="0" x2="1"><stop offset="0" stopColor="#6b7073" /><stop offset=".25" stopColor="#8c9092" /><stop offset=".5" stopColor="#73777a" /><stop offset=".8" stopColor="#7d8285" /><stop offset="1" stopColor="#54585b" /></linearGradient></defs>
    <ellipse cx="57" cy="8" rx="50" ry="12" fill="#4b4f52" />
    <path d="M14 4 L24 -8 L36 -4 L40 -11 L52 -6 L60 4 L68 -10 L82 0 L96 -2 L100 14 L60 20 L20 14Z" fill="#e4e4e2" />
    <path d="M24 -4 L34 8 L18 10Z M66 -2 L76 12 L60 14Z M86 2 L94 12 L80 14Z" fill="#b3b3b0" /><path d="M40 6 L50 2 L54 8 L44 12Z" fill="#58b84a" /><path d="M38 8 l8 -2 l2 8 l-8 0z" fill="#3fb0d8" /><path d="M70 6 L80 0 L82 12 L72 14Z" fill="#49639c" /><path d="M66 8 L70 18 L60 18Z" fill="#b8632f" />
    <path d="M7 8 C20 24 94 24 107 8 L94 106 C90 124 26 124 21 106Z" fill="url(#tr)" />
    <path d="M44 26 C56 22 70 22 80 24 C76 36 66 42 54 42Z" fill="#a9adaf" opacity=".6" /><path d="M22 106 C34 96 80 96 93 106" stroke="#9a9ea1" strokeWidth="3" fill="none" opacity=".6" />
  </Svg>
);

const Slot = ({ children, dot }: { children: ReactNode; dot?: string }) => (
  <div className="relative flex h-full w-[151px] items-center justify-center pb-[10px]">
    {children}
    {dot && <div className={`absolute bottom-[3px] left-[71.500px] size-2 rounded-full ${dot}`} />}
  </div>
);
const Divider = () => <div className="mx-[33.500px] mb-[6px] h-[128px] w-[2px] bg-[#e07a50]" />;

function Dock() {
  return (
    <div className="absolute left-[132px] top-[2057px] flex h-[174px] w-[3321px] items-center rounded-[48px] border-2 border-[#ffffff38] bg-[linear-gradient(90deg,#33578c_0px,#32598c_330px,#47597c_420px,#8d5636_540px,#a0551e_660px,#a2601d_900px,#a6451b_1080px,#a4401a_1250px,#a45c1c_1480px,#a4561c_1700px,#a63d1b_1950px,#a5361b_2250px,#a34b1a_2450px,#a5591c_2720px,#a8511b_2950px,#aa481a_3320px)] pl-[3px] shadow-[0_0_0_1px_rgba(0,0,0,0.35)]">
      <Slot dot="bg-[#b3d4ff]"><Finder /></Slot>
      <Slot dot="bg-[#b3d4ff]"><Outlook /></Slot>
      <Slot dot="bg-[#b3d4ff]"><Mail /></Slot>
      <Slot dot="bg-[#dcd4e4]"><SafariIcon /></Slot>
      <Slot dot="bg-[#ffd39c]"><Music /></Slot>
      <Slot><Launchpad /></Slot>
      <Slot dot="bg-[#ffdb90]"><Messages /></Slot>
      <Slot dot="bg-[#ffb996]"><Maps /></Slot>
      <Slot><House /></Slot>
      <Slot><FindMy /></Slot>
      <Slot dot="bg-[#ffd39c]"><ChromeIcon /></Slot>
      <Slot dot="bg-[#ffcb98]"><Diamonds /></Slot>
      <Slot><Calendar /></Slot>
      <Divider />
      <Slot dot="bg-[#ffb79c]"><Code /></Slot>
      <Slot dot="bg-[#ffb79c]"><GitHubDesktop /></Slot>
      <Slot dot="bg-[#ffc69a]"><Notes /></Slot>
      <Slot dot="bg-[#ffcf9a]"><Illustrator /></Slot>
      <Slot><Installer /></Slot>
      <Divider />
      <Slot><Folder /></Slot>
      <Slot><Thumb /></Slot>
      <Slot><Trash /></Slot>
    </div>
  );
}

export default function App() {
  return (
    <div className="relative h-[2240px] w-[3584px] overflow-hidden bg-[linear-gradient(90deg,#4a86c0_0px,#4a86c0_790px,#8f7c3c_800px,#a8803c_2400px,#3f7fc0_2900px,#3f7fc0_3584px)] font-['Inter','Liberation_Sans',sans-serif]">
      <Wallpaper />
      <div className="absolute left-[70px] top-[60px] h-[1972px] w-[3440px] shadow-[0_26px_50px_rgba(0,0,0,0.62)]" />
      <ArtboardWindow />
      <InspectorWindow />
      <div className="absolute left-[68px] top-[1800px] h-[149px] w-[3376px] rounded-[22px] border border-black bg-[#74746b]" />
      <div className="absolute left-[50px] top-[50px] flex h-[1895px] w-[3504px] flex-col overflow-hidden rounded-[24px] shadow-[0_0_0_1.500px_#000,0_40px_70px_rgba(0,0,0,0.8)]">
        <Chrome />
        <Page />
        <div className="pointer-events-none absolute left-0 top-0 h-[207px] w-full rounded-t-[24px] border-x-2 border-t-2 border-[#77736f] [mask-image:linear-gradient(#000,#0008)]" />
      </div>
      <MenuBar />
      <Dock />
    </div>
  );
}
